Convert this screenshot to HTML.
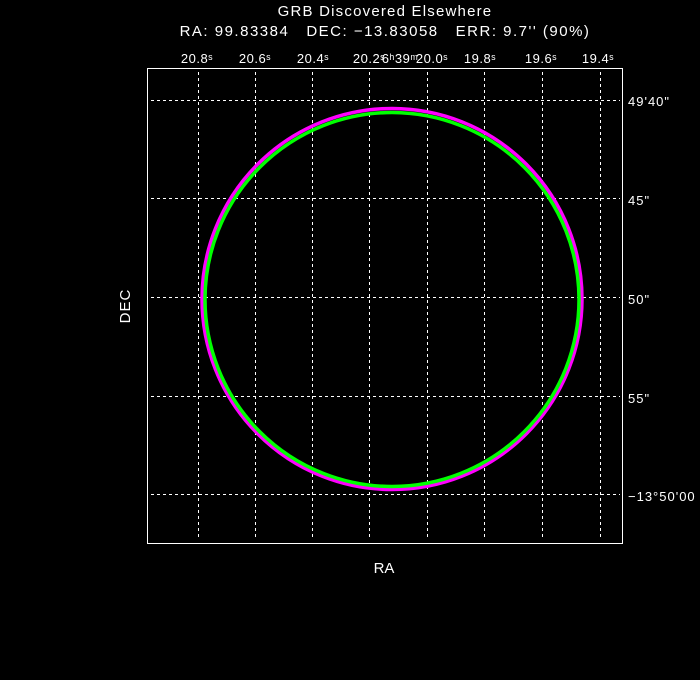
<!DOCTYPE html>
<html><head><style>
html,body{margin:0;padding:0;background:#000;}
svg{display:block}
text{font-family:"Liberation Sans",sans-serif;fill:#fff;}
</style></head><body>
<svg width="700" height="680" viewBox="0 0 700 680">
<rect width="700" height="680" fill="#000"/>
<text x="385" y="16" font-size="15" letter-spacing="1.2" text-anchor="middle">GRB Discovered Elsewhere</text>
<text x="385" y="36" font-size="15" letter-spacing="1.5" text-anchor="middle" xml:space="preserve">RA: 99.83384   DEC: −13.83058   ERR: 9.7'' (90%)</text>
<g font-size="13" letter-spacing="0.5">
<text x="197" y="63" text-anchor="middle">20.8ˢ</text>
<text x="255" y="63" text-anchor="middle">20.6ˢ</text>
<text x="313" y="63" text-anchor="middle">20.4ˢ</text>
<text x="369" y="63" text-anchor="middle">20.2ˢ</text>
<text x="400" y="63" text-anchor="middle">6ʰ39ᵐ</text>
<text x="432" y="63" text-anchor="middle">20.0ˢ</text>
<text x="480" y="63" text-anchor="middle">19.8ˢ</text>
<text x="541" y="63" text-anchor="middle">19.6ˢ</text>
<text x="598" y="63" text-anchor="middle">19.4ˢ</text>
</g>
<g font-size="13" letter-spacing="1">
<text x="628" y="106">49'40"</text>
<text x="628" y="205">45"</text>
<text x="628" y="304">50"</text>
<text x="628" y="403">55"</text>
<text x="628" y="501">−13°50'00</text>
</g>
<text x="384" y="573" font-size="15" text-anchor="middle">RA</text>
<text x="130" y="306" font-size="15" letter-spacing="1" text-anchor="middle" transform="rotate(-90 130 306)">DEC</text>
<g stroke="#fff" stroke-width="1" stroke-dasharray="3,3" fill="none">
<path d="M198.5 72V538M255.5 72V538M312.5 72V538M369.5 72V538M427.5 72V538M484.5 72V538M542.5 72V538M600.5 72V538"/>
<path d="M151 100.5H620M151 198.5H620M151 297.5H620M151 396.5H620M151 494.5H620"/>
</g>
<rect x="147.5" y="68.5" width="475" height="475" fill="none" stroke="#fff" stroke-width="1"/>
<ellipse cx="392" cy="299" rx="190" ry="190.5" fill="none" stroke="#ff00ff" stroke-width="3.5"/>
<ellipse cx="392" cy="299.5" rx="187" ry="187" fill="none" stroke="#00ff00" stroke-width="3.5"/>
</svg>
</body></html>
